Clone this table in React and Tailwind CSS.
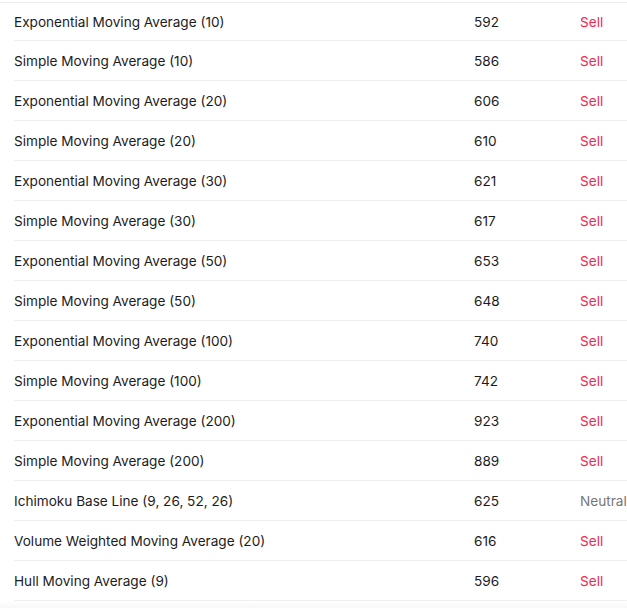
const rows = [
  ["Exponential Moving Average (10)", "592", "Sell"],
  ["Simple Moving Average (10)", "586", "Sell"],
  ["Exponential Moving Average (20)", "606", "Sell"],
  ["Simple Moving Average (20)", "610", "Sell"],
  ["Exponential Moving Average (30)", "621", "Sell"],
  ["Simple Moving Average (30)", "617", "Sell"],
  ["Exponential Moving Average (50)", "653", "Sell"],
  ["Simple Moving Average (50)", "648", "Sell"],
  ["Exponential Moving Average (100)", "740", "Sell"],
  ["Simple Moving Average (100)", "742", "Sell"],
  ["Exponential Moving Average (200)", "923", "Sell"],
  ["Simple Moving Average (200)", "889", "Sell"],
  ["Ichimoku Base Line (9, 26, 52, 26)", "625", "Neutral"],
  ["Volume Weighted Moving Average (20)", "616", "Sell"],
  ["Hull Moving Average (9)", "596", "Sell"],
];

const App = () => {
  return (
    <div className="w-[627px] h-[608px] overflow-hidden bg-white font-['Inter',sans-serif] text-[13.6px] text-[#1c1c1c]">
      <div className="mt-[2px] border-t border-[#ececec]">
        {rows.map(([name, value, signal], i) => (
          <div
            key={i}
            className={`ml-[14px] pt-[1px] grid grid-cols-[460px_106px_1fr] items-center border-b border-[#efefef] ${i === 0 ? "h-[38px]" : "h-[40px]"}`}
          >
            <span>{name}</span>
            <span>{value}</span>
            <span className={signal === "Sell" ? "text-[#f5284d]" : "text-[#777777]"}>{signal}</span>
          </div>
        ))}
      </div>
      <div className="h-[10px] bg-gradient-to-b from-white to-[#f4f4f4]" />
    </div>
  );
};

export default App;
